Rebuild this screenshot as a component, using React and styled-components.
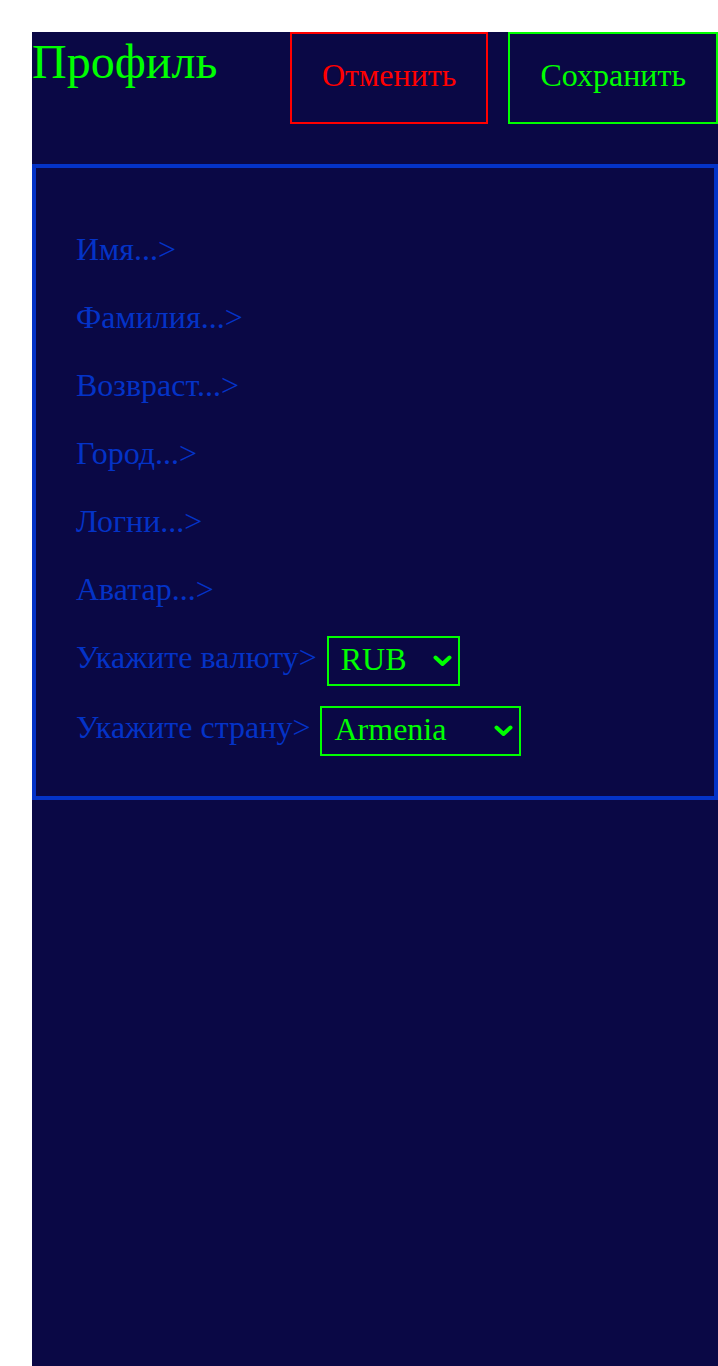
import React, { useState } from "react";
import styled, { createGlobalStyle } from "styled-components";

const GlobalStyle = createGlobalStyle`
  html, body {
    margin: 0;
    padding: 0;
    background: #ffffff;
    overflow: hidden;
  }
  body {
    font-family: "Liberation Serif", "Times New Roman", serif;
  }
`;

const Page = styled.div`
  padding: 32px 0 0 32px;
  min-height: 100vh;
  box-sizing: border-box;
  display: flex;
`;

const Panel = styled.div`
  width: 686px;
  min-height: calc(100vh - 32px);
  background: #0a0845;
  display: flex;
  flex-direction: column;
`;

const Header = styled.div`
  display: grid;
  grid-template-columns: 238px auto auto;
  column-gap: 20px;
  align-items: start;
`;

const Title = styled.h1`
  margin: 0;
  padding-top: 2px;
  font-size: 48px;
  font-weight: 400;
  color: #00ff00;
  line-height: normal;
`;

const ActionButton = styled.button`
  height: 92px;
  padding: 0 30px 6px;
  box-sizing: border-box;
  background: transparent;
  border: 2px solid ${(p) => p.$tone};
  color: ${(p) => p.$tone};
  font-family: "Liberation Serif", "Times New Roman", serif;
  font-size: 32px;
  white-space: nowrap;
  cursor: pointer;
`;

const FormBox = styled.div`
  margin-top: 40px;
  border: 4px solid #0433c7;
  padding: 63px 40px 40px;
  display: flex;
  flex-direction: column;
`;

const Row = styled.div`
  display: flex;
  align-items: flex-start;
  gap: 10px;
  margin-top: ${(p) => p.$space}px;
  &:first-child {
    margin-top: 0;
  }
`;

const Label = styled.span`
  font-size: 32px;
  line-height: normal;
  color: #0433c7;
  padding-top: ${(p) => (p.$withField ? 3 : 0)}px;
  white-space: nowrap;
`;

const PickerWrap = styled.div`
  position: relative;
  width: ${(p) => p.$width}px;
  height: 50px;
  flex-shrink: 0;
`;

const Picker = styled.select`
  appearance: none;
  -webkit-appearance: none;
  width: 100%;
  height: 100%;
  box-sizing: border-box;
  padding: 0 30px 5px 12px;
  background: transparent;
  border: 2px solid #00ff00;
  border-radius: 0;
  color: #00ff00;
  font-family: "Liberation Serif", "Times New Roman", serif;
  font-size: 32px;
  outline: none;
  cursor: pointer;

  option {
    background: #0a0845;
    color: #00ff00;
  }
`;

const Chevron = styled.svg`
  position: absolute;
  right: 8px;
  top: 50%;
  width: 19px;
  height: 12px;
  transform: translateY(-50%);
  pointer-events: none;
`;

function Select({ width, value, onChange, options }) {
  return (
    <PickerWrap $width={width}>
      <Picker value={value} onChange={(e) => onChange(e.target.value)}>
        {options.map((o) => (
          <option key={o}>{o}</option>
        ))}
      </Picker>
      <Chevron viewBox="0 0 19 12">
        <path
          d="M2.5 2.5 L9.5 9 L16.5 2.5"
          fill="none"
          stroke="#00ff00"
          strokeWidth="4"
          strokeLinecap="round"
          strokeLinejoin="round"
        />
      </Chevron>
    </PickerWrap>
  );
}

const fields = ["Имя...>", "Фамилия...>", "Возвраст...>", "Город...>", "Логни...>", "Аватар...>"];

export default function App() {
  const [currency, setCurrency] = useState("RUB");
  const [country, setCountry] = useState("Armenia");

  return (
    <Page>
      <GlobalStyle />
      <Panel>
        <Header>
          <Title>Профиль</Title>
          <ActionButton $tone="#ff0000">Отменить</ActionButton>
          <ActionButton $tone="#00ff00">Сохранить</ActionButton>
        </Header>
        <FormBox>
          {fields.map((f) => (
            <Row key={f} $space={31}>
              <Label>{f}</Label>
            </Row>
          ))}
          <Row $space={28}>
            <Label $withField>Укажите валюту&gt;</Label>
            <Select width={133} value={currency} onChange={setCurrency} options={["RUB", "USD", "EUR"]} />
          </Row>
          <Row $space={20}>
            <Label $withField>Укажите страну&gt;</Label>
            <Select
              width={201}
              value={country}
              onChange={setCountry}
              options={["Armenia", "Russia", "Georgia", "Belarus"]}
            />
          </Row>
        </FormBox>
      </Panel>
    </Page>
  );
}
